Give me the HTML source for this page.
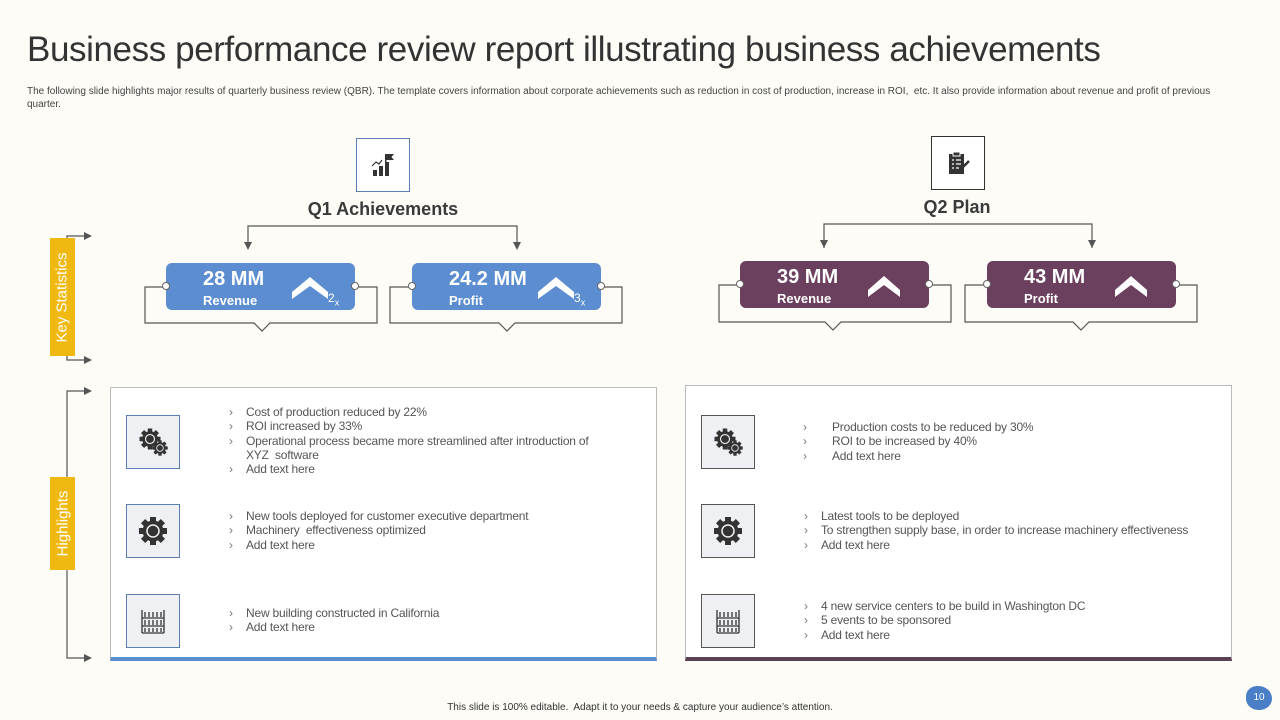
<!DOCTYPE html><html><head><style>
*{margin:0;padding:0;box-sizing:border-box}
body{width:1280px;height:720px;background:#fdfcf7;position:relative;overflow:hidden;font-family:"Liberation Sans",sans-serif;color:#404040}
.a{position:absolute}
.title{left:27px;top:30px;font-size:35px;color:#333;letter-spacing:-0.4px;white-space:nowrap}
.sub{left:27px;top:85px;font-size:10px;line-height:13px;color:#444;width:1215px;letter-spacing:0px}
.ibox{position:absolute;width:54px;height:54px;border:1px solid #5a7fb0;background:#fff;display:flex;align-items:center;justify-content:center}
.h{position:absolute;font-size:18px;font-weight:bold;color:#3a3a3a;transform:translateX(-50%)}
.card{position:absolute;height:47px;width:189px;border-radius:6px;color:#fff}
.card .n{position:absolute;left:37px;top:5px;font-size:20px;font-weight:bold}
.card .l{position:absolute;left:37px;top:30px;font-size:13px;font-weight:bold}
.card svg{position:absolute;left:126px;top:12px}
.card .x{position:absolute;left:162px;top:28px;font-size:12px}
.dot{position:absolute;width:8px;height:8px;border-radius:50%;background:#fff;border:1px solid #666;top:19px}
.yl{position:absolute;background:#f0b912;color:#fff;font-size:15px;display:flex;align-items:center;justify-content:center}
.yl span{transform:rotate(-90deg);white-space:nowrap}
.panel{position:absolute;background:#fff;border:1px solid #bbb}
.gb{position:absolute;width:54px;height:54px;border:1px solid #5a7fb0;background:#eef0f4;display:flex;align-items:center;justify-content:center}
.gb.p{border-color:#555}
.t{position:absolute;font-size:12px;line-height:14.3px;color:#555;letter-spacing:-0.2px}
.t div{position:relative}
.t div::before{content:"›";position:absolute;left:-17px;color:#777}
.t.w div::before{left:-29px}
</style></head><body>
<div class="a title">Business performance review report illustrating business achievements</div>
<div class="a sub">The following slide highlights major results of quarterly business review (QBR). The template covers information about corporate achievements such as reduction in cost of production, increase in ROI,&nbsp; etc. It also provide information about revenue and profit of previous quarter.</div>

<svg class="a" style="left:0;top:0" width="1280" height="720">
<g fill="none" stroke="#555" stroke-width="1.2">
<path d="M248 248V226H517V248"/><path d="M824 248V224H1092V248"/>
<path d="M166 287H145V323H254L262 331L270 323H377V287H355"/>
<path d="M412 287H390V323H499L507 331L515 323H622V287H600"/>
<path d="M740 285H719V322H825L833 330L841 322H951V285H929"/>
<path d="M987 285H965V322H1073L1081 330L1089 322H1197V285H1175"/>
<path d="M84 236H67V360H84"/><path d="M84 391H67V658H84"/>
</g>
<g fill="#555">
<path d="M244 242H252L248 250Z"/><path d="M513 242H521L517 250Z"/>
<path d="M820 240H828L824 248Z"/><path d="M1088 240H1096L1092 248Z"/>
<path d="M84 232V240L92 236Z"/><path d="M84 356V364L92 360Z"/>
<path d="M84 387V395L92 391Z"/><path d="M84 654V662L92 658Z"/>
</g>
</svg>

<div class="ibox" style="left:356px;top:138px"><svg width="26" height="26" viewBox="0 0 26 26" fill="#333"><rect x="3" y="18" width="4" height="6"/><rect x="9" y="14" width="4" height="10"/><rect x="15" y="10" width="4" height="14"/><rect x="15" y="2" width="1.5" height="9"/><path d="M16.5 2H24L21.5 5L24 8H16.5Z"/><path d="M2 14L6 10L9 12L12 8" fill="none" stroke="#333" stroke-width="1.2"/></svg></div>
<div class="h" style="left:383px;top:199px">Q1 Achievements</div>
<div class="ibox" style="left:931px;top:136px;border-color:#333"><svg width="28" height="28" viewBox="0 0 28 28"><rect x="5" y="5" width="15" height="20" fill="#333"/><rect x="9" y="3" width="7" height="4" fill="#333" stroke="#fff" stroke-width="1"/><g stroke="#fff" stroke-width="1.2"><path d="M8 11H10M12 11H17M8 15H10M12 15H17M8 19H10M12 19H15"/></g><path d="M15 22L25 12" stroke="#333" stroke-width="2.5"/></svg></div>
<div class="h" style="left:957px;top:197px">Q2 Plan</div>

<div class="card" style="left:166px;top:263px;background:#5b8dd0"><div class="n">28 MM</div><div class="l">Revenue</div><svg width="36" height="26"><path d="M0 17L18 2L36 17V24L18 11L0 24Z" fill="#fff"/></svg><div class="x">2<sub style="font-size:9px">x</sub></div><div class="dot" style="left:-4px"></div><div class="dot" style="right:-4px"></div></div>
<div class="card" style="left:412px;top:263px;background:#5b8dd0"><div class="n">24.2 MM</div><div class="l">Profit</div><svg width="36" height="26"><path d="M0 17L18 2L36 17V24L18 11L0 24Z" fill="#fff"/></svg><div class="x">3<sub style="font-size:9px">x</sub></div><div class="dot" style="left:-4px"></div><div class="dot" style="right:-4px"></div></div>
<div class="card" style="left:740px;top:261px;background:#6b3f5e"><div class="n">39 MM</div><div class="l">Revenue</div><svg width="36" height="26"><path d="M2 17L18 3L34 17V24L18 12L2 24Z" fill="#fff"/></svg><div class="dot" style="left:-4px"></div><div class="dot" style="right:-4px"></div></div>
<div class="card" style="left:987px;top:261px;background:#6b3f5e"><div class="n">43 MM</div><div class="l">Profit</div><svg width="36" height="26"><path d="M2 17L18 3L34 17V24L18 12L2 24Z" fill="#fff"/></svg><div class="dot" style="left:-4px"></div><div class="dot" style="right:-4px"></div></div>

<div class="yl" style="left:50px;top:238px;width:25px;height:118px"><span>Key Statistics</span></div>
<div class="yl" style="left:50px;top:477px;width:25px;height:93px"><span>Highlights</span></div>

<div class="panel" style="left:110px;top:387px;width:547px;height:274px;border-bottom:4px solid #5b8dd0"></div>
<div class="panel" style="left:685px;top:385px;width:547px;height:276px;border-bottom:4px solid #5a4054"></div>

<svg width="0" height="0" style="position:absolute"><defs>
<g id="gear"><g fill="#333"><rect x="-3" y="-14" width="6" height="28"/><rect x="-14" y="-3" width="28" height="6"/><rect x="-3" y="-14" width="6" height="28" transform="rotate(45)"/><rect x="-3" y="-14" width="6" height="28" transform="rotate(-45)"/></g><circle r="10.5" fill="#333"/><circle r="6" fill="#333" stroke="#eef0f4" stroke-width="1.5"/></g>
<g id="gear2"><g transform="translate(-3,-3) scale(0.75)"><use href="#gear"/></g><g transform="translate(7,6) scale(0.55)"><use href="#gear"/></g></g>
<g id="shelf" fill="none" stroke="#333" stroke-width="1.3"><path d="M-11 -11V12M11 -11V12M-11 -3H11M-11 5H11M-11 12H11"/><path d="M-8 -9V-4M-4 -9V-4M0 -9V-4M4 -9V-4M8 -9V-4M-8 -1V4M-4 -1V4M0 -1V4M4 -1V4M8 -1V4M-8 7V11M-4 7V11M0 7V11M4 7V11M8 7V11"/></g>
</defs></svg>

<div class="gb" style="left:126px;top:415px"><svg width="34" height="34" viewBox="-17 -17 34 34"><use href="#gear2"/></svg></div>
<div class="gb" style="left:126px;top:504px"><svg width="34" height="34" viewBox="-17 -17 34 34"><use href="#gear"/></svg></div>
<div class="gb" style="left:126px;top:594px"><svg width="34" height="34" viewBox="-17 -17 34 34"><use href="#shelf"/></svg></div>
<div class="gb p" style="left:701px;top:415px"><svg width="34" height="34" viewBox="-17 -17 34 34"><use href="#gear2"/></svg></div>
<div class="gb p" style="left:701px;top:504px"><svg width="34" height="34" viewBox="-17 -17 34 34"><use href="#gear"/></svg></div>
<div class="gb p" style="left:701px;top:594px"><svg width="34" height="34" viewBox="-17 -17 34 34"><use href="#shelf"/></svg></div>

<div class="t" style="left:246px;top:405px;width:365px"><div>Cost of production reduced by 22%</div><div>ROI increased by 33%</div><div>Operational process became more streamlined after introduction of XYZ&nbsp; software</div><div>Add text here</div></div>
<div class="t" style="left:246px;top:509px"><div>New tools deployed for customer executive department</div><div>Machinery&nbsp; effectiveness optimized</div><div>Add text here</div></div>
<div class="t" style="left:246px;top:606px"><div>New building constructed in California</div><div>Add text here</div></div>
<div class="t w" style="left:832px;top:420px"><div>Production costs to be reduced by 30%</div><div>ROI to be increased by 40%</div><div>Add text here</div></div>
<div class="t" style="left:821px;top:509px"><div>Latest tools to be deployed</div><div>To strengthen supply base, in order to increase machinery effectiveness</div><div>Add text here</div></div>
<div class="t" style="left:821px;top:599px"><div>4 new service centers to be build in Washington DC</div><div>5 events to be sponsored</div><div>Add text here</div></div>

<div class="a" style="left:0;width:1280px;top:702px;text-align:center;font-size:10px;color:#333">This slide is 100% editable.&nbsp; Adapt it to your needs &amp; capture your audience’s attention.</div>
<div class="a" style="left:1246px;top:686px;width:26px;height:24px;background:#4a7fc8;border-radius:45% 55% 50% 50%;color:#fff;font-size:10px;text-align:center;line-height:24px">10</div>
</body></html>
